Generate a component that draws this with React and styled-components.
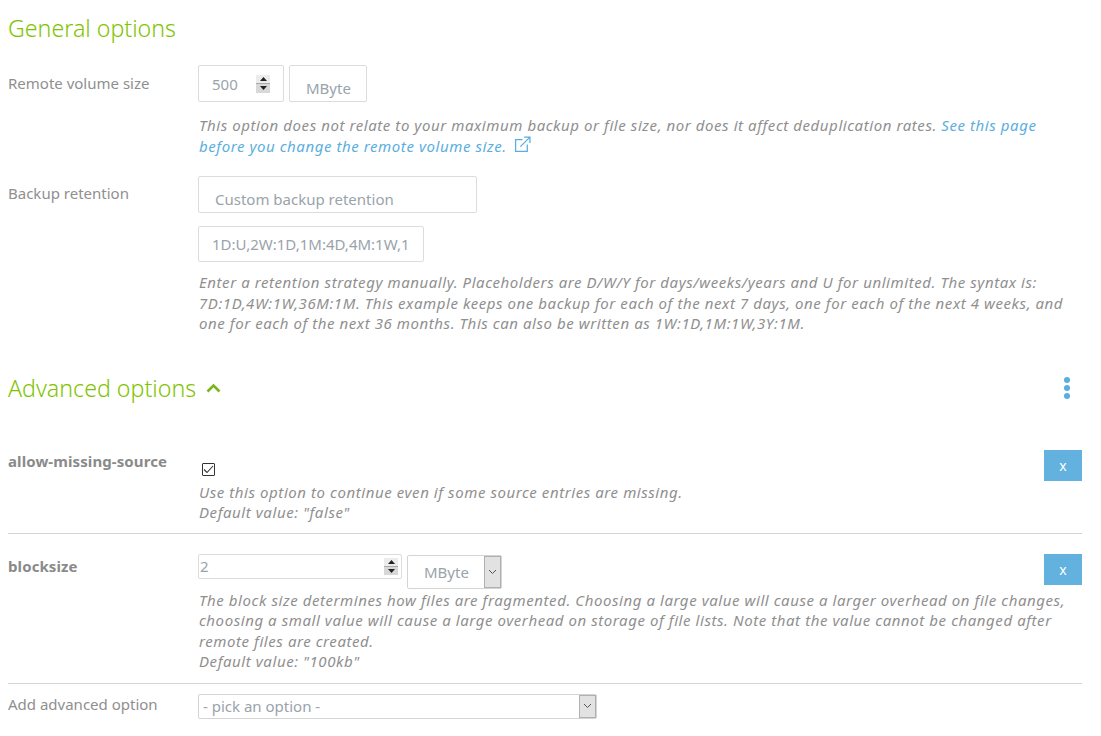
import React from "react"
import styled, { createGlobalStyle } from "styled-components"

const Arrow = ({ flip }) => (
  <svg width="7" height="4" viewBox="0 0 7 4" style={flip ? { transform: "rotate(180deg)" } : undefined}>
    <path d="M3.5 0 L7 4 L0 4 Z" fill="#222" />
  </svg>
)

const Chevron = () => (
  <svg width="9" height="6" viewBox="0 0 9 6" fill="none" stroke="#555" strokeWidth="1">
    <path d="M1 1 L4.5 4.5 L8 1" />
  </svg>
)

const Spinner = ({ right, height }) => (
  <SpinBox $right={right} $height={height}>
    <SpinPart><Arrow /></SpinPart>
    <SpinPart $lower><Arrow flip /></SpinPart>
  </SpinBox>
)

const App = () => (
  <Page>
    <GlobalStyle />
    <Heading>General options</Heading>

    <Row $top={22}>
      <Label $pad={8}>Remote volume size</Label>
      <Control>
        <Inline>
          <Field $width={86} $height={37} $pad="13px">
            500
            <Spinner right={13} height={18} />
          </Field>
          <Field $width={78} $height={37} $pad="16px" $low>MByte</Field>
        </Inline>
        <Hint $top={13}>
          This option does not relate to your maximum backup or file size, nor does it affect deduplication rates.{" "}
          <HintLink>See this page</HintLink>
          <br />
          <HintLink>
            before you change the remote volume size.
            <ExternalIcon width="17" height="17" viewBox="0 0 16 16" fill="none" stroke="#5aaee0" strokeWidth="1.2">
              <path d="M8 3.5 H1.5 V14.5 H12.5 V8" />
              <path d="M6 10 L14.5 1.5 M9.5 1 H15 V6.5" />
            </ExternalIcon>
          </HintLink>
        </Hint>
      </Control>
    </Row>

    <Row $top={20}>
      <Label $pad={7}>Backup retention</Label>
      <Control>
        <Field $width={279} $height={37} $pad="16px" $low>Custom backup retention</Field>
        <Field $width={226} $height={36} $pad="13px" $top={13}>1D:U,2W:1D,1M:4D,4M:1W,1</Field>
        <Hint $top={10}>
          Enter a retention strategy manually. Placeholders are D/W/Y for days/weeks/years and U for unlimited. The syntax is:
          7D:1D,4W:1W,36M:1M. This example keeps one backup for each of the next 7 days, one for each of the next 4 weeks, and
          one for each of the next 36 months. This can also be written as 1W:1D,1M:1W,3Y:1M.
        </Hint>
      </Control>
    </Row>

    <AdvancedHead>
      <HeadGroup>
        <Heading>Advanced options</Heading>
        <svg width="15" height="10" viewBox="0 0 15 10" fill="none" stroke="#7ab51d" strokeWidth="2.6">
          <path d="M1.5 8.5 L7.5 2.5 L13.5 8.5" />
        </svg>
      </HeadGroup>
      <MoreDots>
        <i />
        <i />
        <i />
      </MoreDots>
    </AdvancedHead>

    <OptionRow $top={48} $bottom={10}>
      <OptionName>allow-missing-source</OptionName>
      <Control>
        <CheckBox>
          <svg width="11" height="9" viewBox="0 0 11 9" fill="none" stroke="#333" strokeWidth="1.1">
            <path d="M1 4.5 L4 7.5 L10 1" />
          </svg>
        </CheckBox>
        <Hint $top={6}>
          Use this option to continue even if some source entries are missing.
          <br />
          Default value: "false"
        </Hint>
      </Control>
      <RemoveButton $top={47}>x</RemoveButton>
    </OptionRow>

    <OptionRow $top={20} $bottom={11}>
      <OptionName $nudge={2}>blocksize</OptionName>
      <Control>
        <Inline>
          <Field $width={204} $height={25} $pad="1px">
            2
            <Spinner right={3} height={17} />
          </Field>
          <SelectBox $width={95} $height={34} $pad="16px" $top={1}>
            MByte
            <SelectArrow><Chevron /></SelectArrow>
          </SelectBox>
        </Inline>
        <Hint $top={1}>
          The block size determines how files are fragmented. Choosing a large value will cause a larger overhead on file changes,
          choosing a small value will cause a large overhead on storage of file lists. Note that the value cannot be changed after
          remote files are created.
          <br />
          Default value: "100kb"
        </Hint>
      </Control>
      <RemoveButton $top={20}>x</RemoveButton>
    </OptionRow>

    <AddRow>
      <Label $pad={0}>Add advanced option</Label>
      <SelectBox $width={399} $height={25} $pad="4px">
        - pick an option -
        <SelectArrow><Chevron /></SelectArrow>
      </SelectBox>
    </AddRow>
  </Page>
)

export default App

const GlobalStyle = createGlobalStyle`
  html, body {
    margin: 0;
    background: #fff;
  }
  body {
    font-family: "Noto Sans", "Open Sans", sans-serif;
    font-size: 15px;
    color: #8f8f8f;
  }
`

const Page = styled.div`
  width: 1074px;
  height: 736px;
  margin-left: 8px;
  padding-top: 14px;
  box-sizing: border-box;
  overflow: hidden;
`

const Heading = styled.h2`
  margin: 0;
  font-size: 23.2px;
  line-height: 29px;
  font-weight: 300;
  color: #7fc400;
`

const Row = styled.div`
  display: flex;
  margin-top: ${(p) => p.$top}px;
`

const Label = styled.div`
  flex: 0 0 190px;
  padding-top: ${(p) => p.$pad}px;
  line-height: 20px;
  color: #8f8f8f;
`

const Control = styled.div`
  flex: 1;
  min-width: 0;
`

const Inline = styled.div`
  display: flex;
  align-items: flex-start;
  gap: 5px;
`

const Field = styled.div`
  display: flex;
  position: relative;
  align-items: center;
  box-sizing: border-box;
  width: ${(p) => p.$width}px;
  height: ${(p) => p.$height}px;
  margin-top: ${(p) => p.$top || 0}px;
  padding: ${(p) => (p.$low ? "9px" : "0")} 0 0 ${(p) => p.$pad};
  border: 1px solid #dcdcdc;
  border-radius: 2px;
  background: #fff;
  line-height: 20px;
  color: #9aa3ab;
  white-space: nowrap;
`

const SpinBox = styled.div`
  position: absolute;
  top: 50%;
  right: ${(p) => p.$right}px;
  width: 14px;
  height: ${(p) => p.$height}px;
  margin-top: ${(p) => -p.$height / 2}px;
  display: flex;
  flex-direction: column;
  gap: 1px;
  background: #aaa;
`

const SpinPart = styled.div`
  flex: 1;
  display: flex;
  align-items: center;
  justify-content: center;
  background: ${(p) => (p.$lower ? "#d8d8d8" : "#ececec")};
`

const SelectBox = styled(Field)`
  border-color: #d4d4d4;
`

const SelectArrow = styled.div`
  position: absolute;
  top: 0;
  right: 0;
  bottom: 0;
  width: 17px;
  display: flex;
  align-items: center;
  justify-content: center;
  background: #e2e2e2;
  border: 1px solid #b0b0b0;
  box-sizing: border-box;
`

const Hint = styled.div`
  margin-top: ${(p) => p.$top}px;
  max-width: 880px;
  padding-left: 1px;
  font-style: italic;
  letter-spacing: 0.57px;
  line-height: 20.5px;
  color: #8f8f8f;
`

const HintLink = styled.span`
  color: #5aaee0;
`

const ExternalIcon = styled.svg`
  margin-left: 7px;
  vertical-align: -1px;
`

const AdvancedHead = styled.div`
  display: flex;
  align-items: center;
  justify-content: space-between;
  margin-top: 40px;
`

const HeadGroup = styled.div`
  display: flex;
  align-items: center;
  gap: 10px;
`

const MoreDots = styled.div`
  display: flex;
  flex-direction: column;
  gap: 2px;
  margin-right: 12px;

  i {
    display: block;
    width: 6px;
    height: 6px;
    border-radius: 50%;
    background: #5aaee0;
  }
`

const OptionRow = styled.div`
  display: flex;
  position: relative;
  padding: ${(p) => p.$top}px 0 ${(p) => p.$bottom}px;
  border-bottom: 1px solid #d4d4d4;
`

const OptionName = styled.div`
  flex: 0 0 190px;
  padding-top: ${(p) => p.$nudge || 0}px;
  line-height: 20px;
  font-weight: 700;
  letter-spacing: 0.1px;
  color: #8a8a8a;
`

const CheckBox = styled.div`
  display: flex;
  align-items: center;
  justify-content: center;
  box-sizing: border-box;
  width: 13px;
  height: 13px;
  margin: 12px 0 0 4px;
  border: 1px solid #333;
  border-radius: 1px;
`

const RemoveButton = styled.button`
  position: absolute;
  top: ${(p) => p.$top}px;
  right: 0;
  width: 38px;
  height: 31px;
  padding: 0;
  border: 0;
  background: #62b1de;
  color: #fff;
  font-family: inherit;
  font-size: 14px;
`

const AddRow = styled.div`
  display: flex;
  align-items: flex-start;
  margin-top: 10px;
`
